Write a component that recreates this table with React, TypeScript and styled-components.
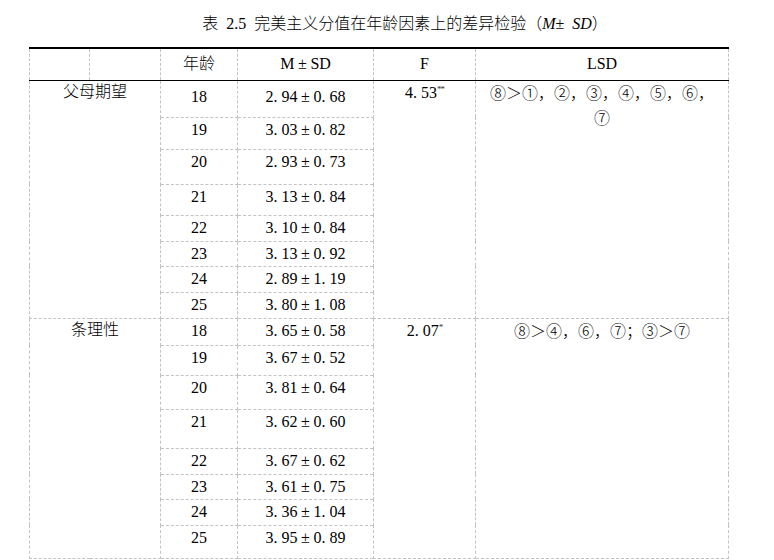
import React from "react";
import styled, { createGlobalStyle, css } from "styled-components";

const GlobalStyle = createGlobalStyle`
  html, body {
    margin: 0;
    padding: 0;
    background: #ffffff;
  }

  body {
    font-family: "Liberation Serif", "Noto Sans CJK SC", serif;
    font-size: 16px;
    font-weight: 300;
    color: #000000;
  }
`;

const Page = styled.div`
  width: 774px;
  height: 560px;
  overflow: hidden;
`;

const Caption = styled.div`
  box-sizing: border-box;
  height: 47px;
  padding: 13px 0 0 36px;
  line-height: 22px;
  text-align: center;
  white-space: nowrap;

  i {
    font-style: italic;
  }
`;

const Gap = styled.span`
  display: inline-block;
  width: 8px;
`;

const Table = styled.table`
  margin-left: 29px;
  width: 699px;
  table-layout: fixed;
  border-collapse: collapse;
  border-top: 2px solid #000000;
`;

const Col = styled.col<{ $w: number }>`
  width: ${(p) => p.$w}px;
`;

const Row = styled.tr<{ $h: number }>`
  height: ${(p) => p.$h}px;
`;

const cellBase = css`
  border: 1px dashed #c3c3c3;
  padding: 0 4px;
  vertical-align: top;
  text-align: center;
  line-height: 22px;
  white-space: nowrap;
  font-weight: 300;
`;

const HeadCell = styled.th`
  ${cellBase}
  padding-top: 4px;
  border-bottom: 1px solid #000000;
`;

const Cell = styled.td<{ $top?: number }>`
  ${cellBase}
  padding-top: ${(p) => p.$top ?? 1}px;
`;

const GroupCell = styled.td`
  ${cellBase}
`;

const LsdCell = styled.td`
  ${cellBase}
  line-height: 25px;
`;

const Dot = styled.span`
  display: inline-block;
  width: 8px;
  text-align: left;
`;

const Pm = styled.span`
  display: inline-block;
  width: 16px;
  text-align: center;
`;

const Stars = styled.sup`
  font-size: 9px;
  line-height: 0;
  vertical-align: 6px;
  letter-spacing: -1px;
  color: #333333;
`;

const Num: React.FC<{ text: string }> = ({ text }) => (
  <>
    {text.split("").map((ch, i) =>
      ch === "." ? (
        <Dot key={i}>.</Dot>
      ) : ch === "±" ? (
        <Pm key={i}>±</Pm>
      ) : (
        <React.Fragment key={i}>{ch}</React.Fragment>
      )
    )}
  </>
);

type AgeRow = { age: string; value: string; h: number; top?: number };

type Group = {
  name: string;
  f: string;
  stars: string;
  lsd: string[];
  rows: AgeRow[];
};

const groups: Group[] = [
  {
    name: "父母期望",
    f: "4.53",
    stars: "**",
    lsd: ["⑧＞①，②，③，④，⑤，⑥，", "⑦"],
    rows: [
      { age: "18", value: "2.94±0.68", h: 37, top: 5 },
      { age: "19", value: "3.03±0.82", h: 32 },
      { age: "20", value: "2.93±0.73", h: 35 },
      { age: "21", value: "3.13±0.84", h: 31 },
      { age: "22", value: "3.10±0.84", h: 26 },
      { age: "23", value: "3.13±0.92", h: 25 },
      { age: "24", value: "2.89±1.19", h: 26 },
      { age: "25", value: "3.80±1.08", h: 26 },
    ],
  },
  {
    name: "条理性",
    f: "2.07",
    stars: "*",
    lsd: ["⑧＞④，⑥，⑦；③＞⑦"],
    rows: [
      { age: "18", value: "3.65±0.58", h: 27 },
      { age: "19", value: "3.67±0.52", h: 30 },
      { age: "20", value: "3.81±0.64", h: 34 },
      { age: "21", value: "3.62±0.60", h: 39 },
      { age: "22", value: "3.67±0.62", h: 26 },
      { age: "23", value: "3.61±0.75", h: 25 },
      { age: "24", value: "3.36±1.04", h: 26 },
      { age: "25", value: "3.95±0.89", h: 33 },
    ],
  },
];

const App: React.FC = () => {
  return (
    <Page>
      <GlobalStyle />
      <Caption>
        表<Gap />2.5<Gap />完美主义分值在年龄因素上的差异检验（<i>M</i>±<Gap />
        <i>SD</i>）
      </Caption>
      <Table>
        <colgroup>
          <Col $w={60} />
          <Col $w={71} />
          <Col $w={77} />
          <Col $w={136} />
          <Col $w={102} />
          <Col $w={253} />
        </colgroup>
        <thead>
          <Row $h={32}>
            <HeadCell />
            <HeadCell />
            <HeadCell>年龄</HeadCell>
            <HeadCell>
              M<Pm>±</Pm>SD
            </HeadCell>
            <HeadCell>F</HeadCell>
            <HeadCell>LSD</HeadCell>
          </Row>
        </thead>
        <tbody>
          {groups.map((g) =>
            g.rows.map((r, i) => (
              <Row $h={r.h} key={g.name + r.age}>
                {i === 0 && (
                  <GroupCell colSpan={2} rowSpan={g.rows.length}>
                    {g.name}
                  </GroupCell>
                )}
                <Cell $top={r.top}>{r.age}</Cell>
                <Cell $top={r.top}>
                  <Num text={r.value} />
                </Cell>
                {i === 0 && (
                  <Cell rowSpan={g.rows.length}>
                    <Num text={g.f} />
                    <Stars>{g.stars}</Stars>
                  </Cell>
                )}
                {i === 0 && (
                  <LsdCell rowSpan={g.rows.length}>
                    {g.lsd.map((line, k) => (
                      <div key={k}>{line}</div>
                    ))}
                  </LsdCell>
                )}
              </Row>
            ))
          )}
        </tbody>
      </Table>
    </Page>
  );
};

export default App;
